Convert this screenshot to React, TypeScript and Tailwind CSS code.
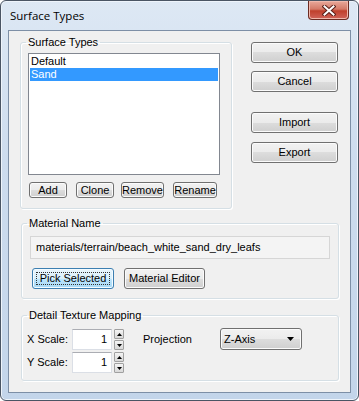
const btnFace =
  "bg-[linear-gradient(to_bottom,#f2f2f2_0%,#ebebeb_50%,#dddddd_50%,#cfcfcf_100%)] border border-[#707070] shadow-[inset_0_0_0_1px_#fbfbfb]";
const btnHot =
  "bg-[linear-gradient(to_bottom,#eaf6fd_0%,#d9f0fc_50%,#bee6fd_50%,#a7d9f5_100%)] border border-[#3c7fb1] shadow-[inset_0_0_0_1px_#f4fbff]";

function Button({
  label,
  className,
  hot,
}: {
  label: string;
  className: string;
  hot?: boolean;
}) {
  return (
    <button
      type="button"
      className={`relative flex shrink-0 items-center justify-center rounded-[3px] text-[11px] leading-none text-black ${
        hot ? btnHot : btnFace
      } ${className}`}
    >
      {hot ? (
        <span className="absolute inset-[3px] border border-dotted border-[#333]" />
      ) : null}
      <span className="relative">{label}</span>
    </button>
  );
}

function Group({
  title,
  className,
  children,
}: {
  title: string;
  className: string;
  children: React.ReactNode;
}) {
  return (
    <fieldset
      className={`rounded-[3px] border border-[#d5dfe5] shadow-[inset_1px_1px_0_#fff,1px_1px_0_#fff] ${className}`}
    >
      <legend className="ml-[5px] px-[2px] text-[11px] leading-[13px] text-black">{title}</legend>
      {children}
    </fieldset>
  );
}

function Spinner() {
  return (
    <div className="ml-[2px] flex w-[10px] flex-col gap-[1px]">
      {["up", "down"].map((dir) => (
        <div
          key={dir}
          className="flex h-[10px] items-center justify-center rounded-[1px] border border-[#a0a0a0] bg-[linear-gradient(to_bottom,#f4f4f4,#d8d8d8)]"
        >
          <svg width="5" height="3" viewBox="0 0 5 3">
            {dir === "up" ? (
              <path d="M0 3 L2.5 0 L5 3 Z" fill="#000" />
            ) : (
              <path d="M0 0 L5 0 L2.5 3 Z" fill="#000" />
            )}
          </svg>
        </div>
      ))}
    </div>
  );
}

function ScaleRow({ label }: { label: string }) {
  return (
    <div className="flex h-[21px] items-center">
      <span className="w-[45px] text-[11px]">{label}</span>
      <div className="flex h-[21px] w-[40px] items-center justify-end border border-[#dbdfe6] border-t-[#abadb3] bg-white pr-[4px] text-[11px]">
        1
      </div>
      <Spinner />
    </div>
  );
}

export default function App() {
  return (
    <div className="h-[401px] w-[359px] bg-white font-['Liberation_Sans',Arial,sans-serif] text-black">
      <div className="flex h-[401px] w-[359px] flex-col rounded-[6px] border border-[#4a5564] bg-[linear-gradient(to_bottom,#dde8f4_0%,#cddcee_40%,#c3d5ea_100%)] px-[7px] pb-[7px] shadow-[inset_0_0_0_1px_#eef4fb]">
        {/* title bar */}
        <div className="flex h-[29px] items-start justify-between">
          <span className="pl-[2px] pt-[7px] font-['Open_Sans',sans-serif] text-[11.5px] leading-[15px]">
            Surface Types
          </span>
          <div className="mr-[2px] flex h-[19px] w-[41px] items-center justify-center rounded-b-[4px] border border-t-0 border-[#6b2b22] bg-[linear-gradient(to_bottom,#e9a99b_0%,#d47a68_45%,#c0402c_55%,#d0645a_100%)] shadow-[inset_0_0_0_1px_#f0b8ac]">
            <svg width="14" height="11" viewBox="0 0 14 11">
              <path d="M2.5 1.5 L11.5 9.5 M11.5 1.5 L2.5 9.5" stroke="#5a1f18" strokeWidth="4" strokeLinecap="square" />
              <path d="M2.5 1.5 L11.5 9.5 M11.5 1.5 L2.5 9.5" stroke="#fff" strokeWidth="2" strokeLinecap="square" />
            </svg>
          </div>
        </div>

        {/* client area */}
        <div className="flex h-[363px] flex-col border border-[#7d8fa6] bg-[#f0f0f0] text-[11px]">
          <div className="flex items-start">
            <Group title="Surface Types" className="ml-[11px] mt-[5px] h-[173px] w-[212px]">
              <div className="ml-[7px] mt-[4px] h-[122px] w-[192px] border border-[#828790] bg-white p-[1px]">
                <div className="h-[13px] px-[1px] leading-[13px]">Default</div>
                <div className="h-[13px] bg-[#3399ff] px-[1px] leading-[13px] text-white">Sand</div>
              </div>
              <div className="ml-[8px] mt-[7px] flex">
                <Button label="Add" className="h-[16px] w-[38px]" />
                <Button label="Clone" className="ml-[9px] h-[16px] w-[38px]" />
                <Button label="Remove" className="ml-[7px] h-[16px] w-[43px]" />
                <Button label="Rename" className="ml-[9px] h-[16px] w-[44px]" />
              </div>
            </Group>
            <div className="ml-[19px] mt-[11px] flex flex-col">
              <Button label="OK" className="h-[21px] w-[87px]" />
              <Button label="Cancel" className="mt-[8px] h-[21px] w-[87px]" />
              <Button label="Import" className="mt-[20px] h-[21px] w-[87px]" />
              <Button label="Export" className="mt-[9px] h-[21px] w-[87px]" />
            </div>
          </div>

          <Group title="Material Name" className="ml-[12px] mt-[8px] w-[318px] pb-[9px]">
            <div className="ml-[8px] mt-[6px] flex h-[23px] w-[300px] items-center border border-[#d6d6d6] bg-[#f4f4f4] pl-[5px]">
              materials/terrain/beach_white_sand_dry_leafs
            </div>
            <div className="ml-[10px] mt-[9px] flex">
              <Button label="Pick Selected" className="h-[21px] w-[82px]" hot />
              <Button label="Material Editor" className="ml-[10px] h-[21px] w-[81px]" />
            </div>
          </Group>

          <Group title="Detail Texture Mapping" className="ml-[12px] mt-[10px] w-[318px] pb-[7px]">
            <div className="ml-[5px] mt-[7px] flex items-start">
              <div className="flex flex-col gap-[2px]">
                <ScaleRow label="X Scale:" />
                <ScaleRow label="Y Scale:" />
              </div>
              <span className="ml-[19px] flex h-[21px] w-[77px] items-center">Projection</span>
              <div className="-mt-[1px] flex h-[22px] w-[82px] items-center justify-between rounded-[3px] border border-[#707070] bg-[linear-gradient(to_bottom,#f2f2f2_0%,#ebebeb_50%,#dddddd_50%,#cfcfcf_100%)] pl-[3px] pr-[7px] shadow-[inset_0_0_0_1px_#fbfbfb]">
                <span>Z-Axis</span>
                <svg width="7" height="4" viewBox="0 0 7 4">
                  <path d="M0 0 L7 0 L3.5 4 Z" fill="#000" />
                </svg>
              </div>
            </div>
          </Group>
        </div>
      </div>
    </div>
  );
}
